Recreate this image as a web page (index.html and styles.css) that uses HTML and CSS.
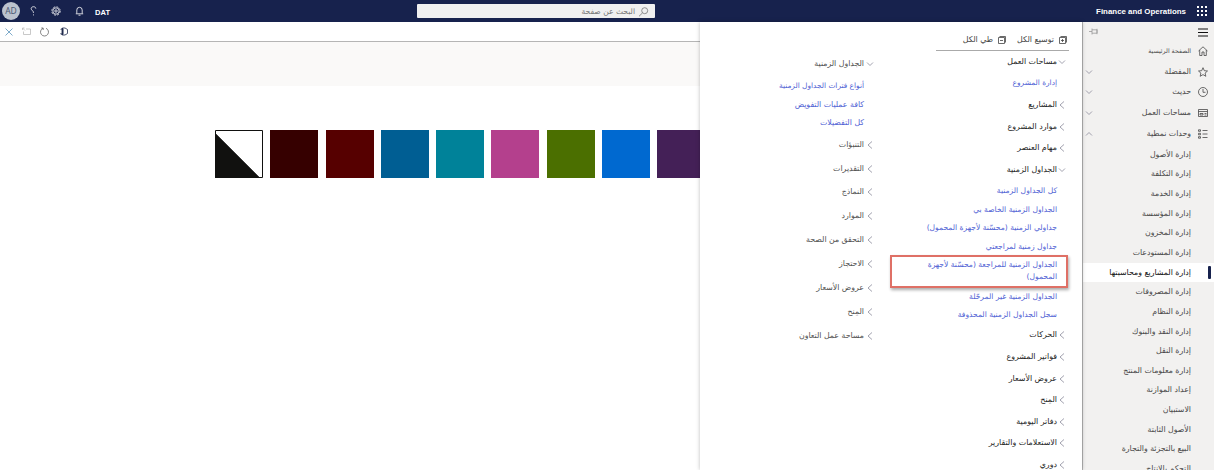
FILE: index.html
```html
<!DOCTYPE html>
<html lang="ar" dir="rtl">
<head>
<meta charset="utf-8">
<title>Finance and Operations</title>
<link rel="stylesheet" href="styles.css">
</head>
<body>
<svg class="defs" width="0" height="0">
  <symbol id="down" viewBox="0 0 8 8"><path d="M1 2.500 4 5.500 7 2.500"/></symbol>
  <symbol id="up" viewBox="0 0 8 8"><path d="M1 5.500 4 2.500 7 5.500"/></symbol>
  <symbol id="left" viewBox="0 0 8 8"><path d="M6 .5 2 4 6 7.500"/></symbol>
</svg>
<header class="topbar">
  <div class="brand">
    <svg class="waffle" width="10" height="10" viewBox="0 0 10 10"><path d="M0 1h2M4 1h2M8 1h2M0 5h2M4 5h2M8 5h2M0 9h2M4 9h2M8 9h2"/></svg>
    <span class="product">Finance and Operations</span>
  </div>
  <div class="search">
    <svg width="11" height="10" viewBox="0 0 11 10"><circle cx="6.700" cy="3.700" r="3"/><path d="M4.500 5.900 1 9.300"/></svg>
    <span>البحث عن صفحة</span>
  </div>
  <div class="actions">
    <span class="company">DAT</span>
    <svg class="bell" width="9" height="10" viewBox="0 0 9 10"><path d="M1.800 7.500V4a2.700 2.700 0 0 1 5.400 0v3.500M.8 7.800h7.400M3.500 9.200h2"/></svg>
    <svg class="gear" width="10" height="10" viewBox="0 0 10 10"><circle cx="5" cy="5" r="4.200" stroke-dasharray="2 1.300"/><circle cx="5" cy="5" r="3.200"/><circle cx="5" cy="5" r="1.200"/></svg>
    <svg class="help" width="7" height="10" viewBox="0 0 7 10"><path d="M5.800 2.600C5.800 0 1.200 .1 1.200 2.600c0 1.800 2.300 2 2.300 4.300M3.500 8.400v1"/></svg>
    <span class="avatar">AD</span>
  </div>
</header>
<div class="shell">
  <nav class="sidebar">
    <div class="side-head">
      <svg class="burger" width="10" height="9" viewBox="0 0 10 9"><path d="M0 1h10M0 4.500h10M0 8h10"/></svg>
      <svg class="pin" width="9" height="7" viewBox="0 0 9 7"><path d="M0 3.500h3M3 .5v6M3 1.800h5v3.400H3M8 .8v5.400"/></svg>
    </div>
    <div class="nav-row"><svg class="icon" viewBox="0 0 10 10"><path d="M.5 5 5 .8 9.500 5M1.700 4v5.500h2.300V6h2v3.500h2.300V4"/></svg><span class="small">الصفحة الرئيسية</span></div>
    <div class="nav-row"><svg class="icon" viewBox="0 0 10 10"><path d="M5 .7 6.300 3.700 9.500 4 7.100 6.100 7.800 9.300 5 7.600 2.200 9.300 2.900 6.100.5 4 3.700 3.700Z"/></svg><span>المفضلة</span><svg class="chev"><use href="#down"/></svg></div>
    <div class="nav-row"><svg class="icon" viewBox="0 0 10 10"><circle cx="5" cy="5" r="4.500"/><path d="M5 2v3.300h2.500"/></svg><span>حديث</span><svg class="chev"><use href="#down"/></svg></div>
    <div class="nav-row"><svg class="icon" viewBox="0 0 10 10"><path d="M.5 1.500h9v7h-9zM.5 3.500h9M2 5.500h3v1.500H2zM6.500 5.500h2M6.500 7h2"/></svg><span>مساحات العمل</span><svg class="chev"><use href="#down"/></svg></div>
    <div class="nav-row"><svg class="icon" viewBox="0 0 10 10"><path d="M4.500 1.500h5M4.500 5h5M4.500 8.500h5M.5.8h2v1.500h-2zM.5 4.300h2v1.500h-2zM.5 7.700h2v1.500h-2z"/></svg><span>وحدات نمطية</span><svg class="chev"><use href="#up"/></svg></div>
    <ul class="modules">
      <li><span>إدارة الأصول</span></li>
      <li><span>إدارة التكلفة</span></li>
      <li><span>إدارة الخدمة</span></li>
      <li><span>إدارة المؤسسة</span></li>
      <li><span>إدارة المخزون</span></li>
      <li><span>إدارة المستودعات</span></li>
      <li class="active"><span>إدارة المشاريع ومحاسبتها</span></li>
      <li><span>إدارة المصروفات</span></li>
      <li><span>إدارة النظام</span></li>
      <li><span>إدارة النقد والبنوك</span></li>
      <li><span>إدارة النقل</span></li>
      <li><span>إدارة معلومات المنتج</span></li>
      <li><span>إعداد الموازنة</span></li>
      <li><span>الاستبيان</span></li>
      <li><span>الأصول الثابتة</span></li>
      <li><span>البيع بالتجزئة والتجارة</span></li>
      <li><span>التحكم بالإنتاج</span></li>
    </ul>
  </nav>
  <section class="flyout">
    <div class="col primary">
      <div class="tools">
        <svg width="8" height="8" viewBox="0 0 8 8"><path d="M1.500 .5h6v6M.5 1.500h6v6h-6zM2 4.500h3M3.500 3v3"/></svg><span>توسيع الكل</span>
        <svg width="8" height="8" viewBox="0 0 8 8"><path d="M1.500 .5h6v6M.5 1.500h6v6h-6zM2 4.500h3"/></svg><span>طي الكل</span>
      </div>
      <div class="head"><svg class="chev"><use href="#down"/></svg><span>مساحات العمل</span></div>
      <a class="link tall"><span>إدارة المشروع</span></a>
      <div class="head"><svg class="chev"><use href="#left"/></svg><span>المشاريع</span></div>
      <div class="head"><svg class="chev"><use href="#left"/></svg><span>موارد المشروع</span></div>
      <div class="head"><svg class="chev"><use href="#left"/></svg><span>مهام العنصر</span></div>
      <div class="head"><svg class="chev"><use href="#down"/></svg><span>الجداول الزمنية</span></div>
      <div class="links">
        <a class="link"><span>كل الجداول الزمنية</span></a>
        <a class="link"><span>الجداول الزمنية الخاصة بي</span></a>
        <a class="link"><span>جداولي الزمنية (محسّنة لأجهزة المحمول)</span></a>
        <a class="link"><span>جداول زمنية لمراجعتي</span></a>
        <a class="link marked"><span>الجداول الزمنية للمراجعة (محسّنة لأجهزة<br>المحمول)</span></a>
        <a class="link"><span>الجداول الزمنية غير المرحّلة</span></a>
        <a class="link"><span>سجل الجداول الزمنية المحذوفة</span></a>
      </div>
      <div class="head"><svg class="chev"><use href="#left"/></svg><span>الحركات</span></div>
      <div class="head"><svg class="chev"><use href="#left"/></svg><span>فواتير المشروع</span></div>
      <div class="head"><svg class="chev"><use href="#left"/></svg><span>عروض الأسعار</span></div>
      <div class="head"><svg class="chev"><use href="#left"/></svg><span>المِنح</span></div>
      <div class="head"><svg class="chev"><use href="#left"/></svg><span>دفاتر اليومية</span></div>
      <div class="head"><svg class="chev"><use href="#left"/></svg><span>الاستعلامات والتقارير</span></div>
      <div class="head"><svg class="chev"><use href="#left"/></svg><span>دوري</span></div>
    </div>
    <div class="col secondary">
      <div class="head"><svg class="chev"><use href="#down"/></svg><span>الجداول الزمنية</span></div>
      <div class="links">
        <a class="link narrow"><span>أنواع فترات الجداول الزمنية</span></a>
        <a class="link"><span>كافة عمليات التفويض</span></a>
        <a class="link"><span>كل التفضيلات</span></a>
      </div>
      <div class="head"><svg class="chev"><use href="#left"/></svg><span>التنبؤات</span></div>
      <div class="head"><svg class="chev"><use href="#left"/></svg><span>التقديرات</span></div>
      <div class="head"><svg class="chev"><use href="#left"/></svg><span>النماذج</span></div>
      <div class="head"><svg class="chev"><use href="#left"/></svg><span>الموارد</span></div>
      <div class="head"><svg class="chev"><use href="#left"/></svg><span>التحقق من الصحة</span></div>
      <div class="head"><svg class="chev"><use href="#left"/></svg><span>الاحتجاز</span></div>
      <div class="head"><svg class="chev"><use href="#left"/></svg><span>عروض الأسعار</span></div>
      <div class="head"><svg class="chev"><use href="#left"/></svg><span>المِنح</span></div>
      <div class="head"><svg class="chev"><use href="#left"/></svg><span>مساحة عمل التعاون</span></div>
    </div>
  </section>
  <main class="page">
    <div class="commands">
      <svg class="office" width="8" height="9" viewBox="0 0 8 9"><path class="solid" d="M0 2.500 3.500 0v9L0 6.800V6.500h1.600v-4z"/><path d="M4 1h1l2.500 1.500v4L5 8H4"/></svg>
      <svg class="refresh" width="9" height="10" viewBox="0 0 9 10"><path d="M6 1.300A4 4 0 1 1 3 1.300M3.200 3V1H1.300"/></svg>
      <svg class="popout" width="9" height="9" viewBox="0 0 9 9"><path d="M4 2h4.500v5.500h-7V4.500M3 3.500.5 1M.5 3V1h2"/></svg>
      <svg class="close" width="8" height="8" viewBox="0 0 8 8"><path d="M.5.5l7 7M7.500.5l-7 7"/></svg>
    </div>
    <div class="band"></div>
    <div class="swatches">
      <i class="swatch contrast"><svg width="48" height="48" viewBox="0 0 48 48"><path d="M0 3 45 48H0z" fill="#11110f"/><path d="M.5.5h47v47H.5z" fill="none" stroke="#11110f" stroke-width="1"/></svg></i>
      <i class="swatch maroon"></i><i class="swatch red"></i><i class="swatch blue"></i><i class="swatch teal"></i><i class="swatch pink"></i><i class="swatch green"></i><i class="swatch azure"></i><i class="swatch purple"></i>
    </div>
  </main>
</div>
</body>
</html>
```
FILE: styles.css
```css
* { box-sizing: border-box; }
body { margin: 0; width: 1214px; height: 470px; overflow: hidden; background: #fff; font: 8px/12px "DejaVu Sans", sans-serif; color: #333; display: flex; flex-direction: column; }
svg { fill: none; stroke: currentColor; stroke-width: .8; flex: none; display: block; }
span { white-space: nowrap; }
.defs { position: absolute; }
.topbar { height: 22px; flex: none; background: #17224d; color: #fff; display: flex; align-items: center; }
.brand { display: flex; align-items: center; gap: 11px; width: 559px; padding-right: 7px; }
.waffle { stroke-width: 2; }
.product { font: bold 7.9px "Liberation Sans", sans-serif; padding-top: 1px; }
.search { width: 238px; height: 14px; background: #f0f0f0; color: #777; display: flex; align-items: center; gap: 3px; padding-right: 6px; border-radius: 1px; font-size: 7.6px; padding-top: 1px; }
.actions { flex: 1; display: flex; align-items: center; justify-content: flex-end; padding-left: 2px; }
.company { font: bold 7.6px "Liberation Sans", sans-serif; padding-top: 2px; }
.bell { margin-right: 11px; }
.gear { margin-right: 14px; }
.help { margin-right: 14px; }
.avatar { width: 18px; height: 18px; border-radius: 50%; background: #bcc3ce; color: #4c5b74; font: 8.5px/18px "Noto Sans", sans-serif; text-align: center; margin-right: 10px; }
.shell { flex: 1; min-height: 0; display: flex; }
.sidebar { width: 132px; flex: none; border-left: 1px solid #b5b5b5; background: #f2f1f0; color: #484848; overflow: hidden; font-size: 7.8px; }
.side-head { height: 19px; display: flex; justify-content: space-between; padding: 6px 6px 0 6px; }
.burger { color: #111; stroke-width: 1.2; }
.pin { color: #999; }
.nav-row { height: 20.6px; display: flex; align-items: center; padding: 0 6px 0 2px; gap: 7px; }
.icon { width: 10px; height: 10px; }
.nav-row .chev { margin-right: auto; }
.small { font-size: 6.2px; }
.chev { width: 8px; height: 8px; color: #8a8a9a; }
.modules { list-style: none; margin: .8px 0 0; padding: 0; }
.modules li { height: 19.67px; display: flex; align-items: center; padding-right: 23px; }
.modules .active { background: #fff; color: #111; padding-right: 3px; }
.active::before { content: ""; width: 3px; height: 13px; background: #17224d; border-radius: 1px; margin-left: 17px; }
.flyout { width: 382px; flex: none; background: #fff; display: flex; box-shadow: 0 0 4px #0004; z-index: 1; overflow: hidden; }
.col { display: flex; flex-direction: column; }
.primary { width: 193px; padding: 9px 13px 0 0; color: #222; font-size: 7.9px; }
.secondary { padding: 30px 15px 0 0; color: #505050; flex: 1; font-size: 7.8px; }
.tools { width: 133px; height: 20px; flex: none; border-bottom: 1px solid #aaa; display: flex; align-items: center; gap: 5px; padding: 0 2px 2px 0; color: #444; }
.tools span + svg { margin-right: 6px; }
.head { height: 21.65px; display: flex; align-items: center; gap: 1px; padding-right: 3px; flex: none; }
.link { height: 18.6px; display: flex; align-items: center; padding-right: 12px; color: #5062d4; flex: none; }
.primary .link { font-size: 7.6px; }
.primary .tall { height: 21.65px; font-size: 7.4px; }
.links { padding-top: 1px; }
.marked { height: 33px; width: 178px; margin: -1px 1px -1px 0; padding: 0 9px 2px 0; border: 2px solid #df7066; box-shadow: 1px 2px 3px #0005; }
.secondary .head { height: 23.9px; padding-right: 0; gap: 2px; }
.secondary .link { padding-right: 10px; }
.secondary .narrow { font-size: 7.4px; }
.page { flex: 1; min-width: 0; overflow: hidden; }
.commands { height: 20px; border-bottom: 1px solid #b5b5b5; display: flex; align-items: center; justify-content: flex-end; padding-left: 5px; color: #666; }
.office { color: #202b4e; margin-left: 11px; }
.solid { fill: currentColor; stroke: none; }
.refresh { margin-left: 9px; }
.popout { color: #bbb; margin-left: 9px; }
.close { color: #5d96bd; }
.band { height: 44px; background: #faf9f8; }
.swatches { direction: ltr; display: flex; gap: 7.25px; padding: 44px 0 0 215px; }
.swatch { width: 48px; height: 48px; flex: none; }
.maroon { background: #360000; }
.red { background: #560000; }
.blue { background: #005e93; }
.teal { background: #008299; }
.pink { background: #b4408d; }
.green { background: #4b6f00; }
.azure { background: #0069d0; }
.purple { background: #442057; }
```
